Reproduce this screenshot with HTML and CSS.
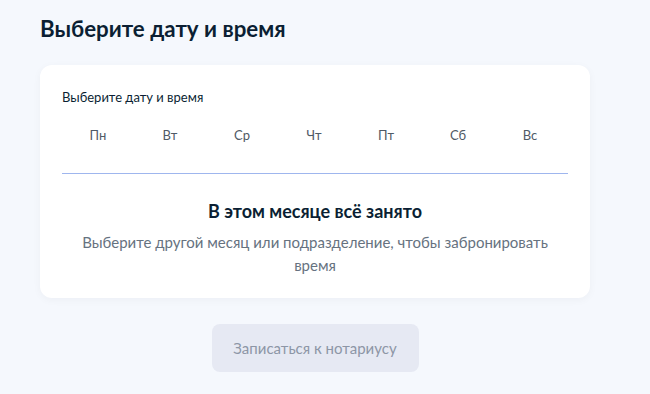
FILE: index.html
```html
<!DOCTYPE html>
<html lang="ru">
  <head>
    <meta charset="UTF-8" />
    <meta name="viewport" content="width=device-width, initial-scale=1.0" />
    <title>Запись к нотариусу</title>
    <link rel="stylesheet" href="styles.css">
  </head>

  <body>
    <div class="page">
      <h1>Выберите дату и время</h1>

      <div class="card">
        <p class="card-label">Выберите дату и время</p>
        <div class="weekdays">
          <span>Пн</span>
          <span>Вт</span>
          <span>Ср</span>
          <span>Чт</span>
          <span>Пт</span>
          <span>Сб</span>
          <span>Вс</span>
        </div>
        <div class="divider"></div>
        <div class="empty">
          <h2>В этом месяце всё занято</h2>
          <p>Выберите другой месяц или подразделение, чтобы забронировать время</p>
        </div>
      </div>

      <div class="actions">
        <button class="btn" disabled>Записаться к нотариусу</button>
      </div>
    </div>
  </body>
</html>
```

FILE: styles.css
```css
* {
  margin: 0;
  padding: 0;
  box-sizing: border-box;
}

body {
  background-color: #f5f8fd;
  font-family: Lato, "Noto Sans", sans-serif;
  color: #0b1f33;
}

.page {
  width: 550px;
  margin-left: 40px;
  padding-top: 14px;
}

h1 {
  font-size: 22.3px;
  font-weight: 700;
  line-height: 30px;
  margin-bottom: 21px;
}

.card {
  background-color: #fff;
  border-radius: 12px;
  box-shadow: 0 2px 8px rgba(11, 31, 51, 0.04);
  padding: 24px 22px 21px;
}

.card-label {
  font-size: 13px;
  line-height: 16px;
}

.weekdays {
  display: grid;
  grid-template-columns: repeat(7, 72px);
  margin-top: 22px;
  font-size: 13px;
  line-height: 16px;
  color: #4f5a66;
  text-align: center;
}

.divider {
  height: 1px;
  background-color: #9fb6ee;
  margin-top: 30px;
}

.empty {
  text-align: center;
  margin-top: 25px;
}

.empty h2 {
  font-size: 18px;
  font-weight: 700;
  line-height: 24px;
}

.empty p {
  font-size: 15px;
  line-height: 23px;
  color: #66727f;
  margin: 8px auto 0;
  max-width: 480px;
}

.actions {
  display: flex;
  justify-content: center;
  margin-top: 26px;
}

.btn {
  all: unset;
  width: 207px;
  height: 48px;
  line-height: 48px;
  text-align: center;
  font-size: 15px;
  color: #8d96a6;
  background-color: #e6e9f3;
  border-radius: 8px;
}
```
